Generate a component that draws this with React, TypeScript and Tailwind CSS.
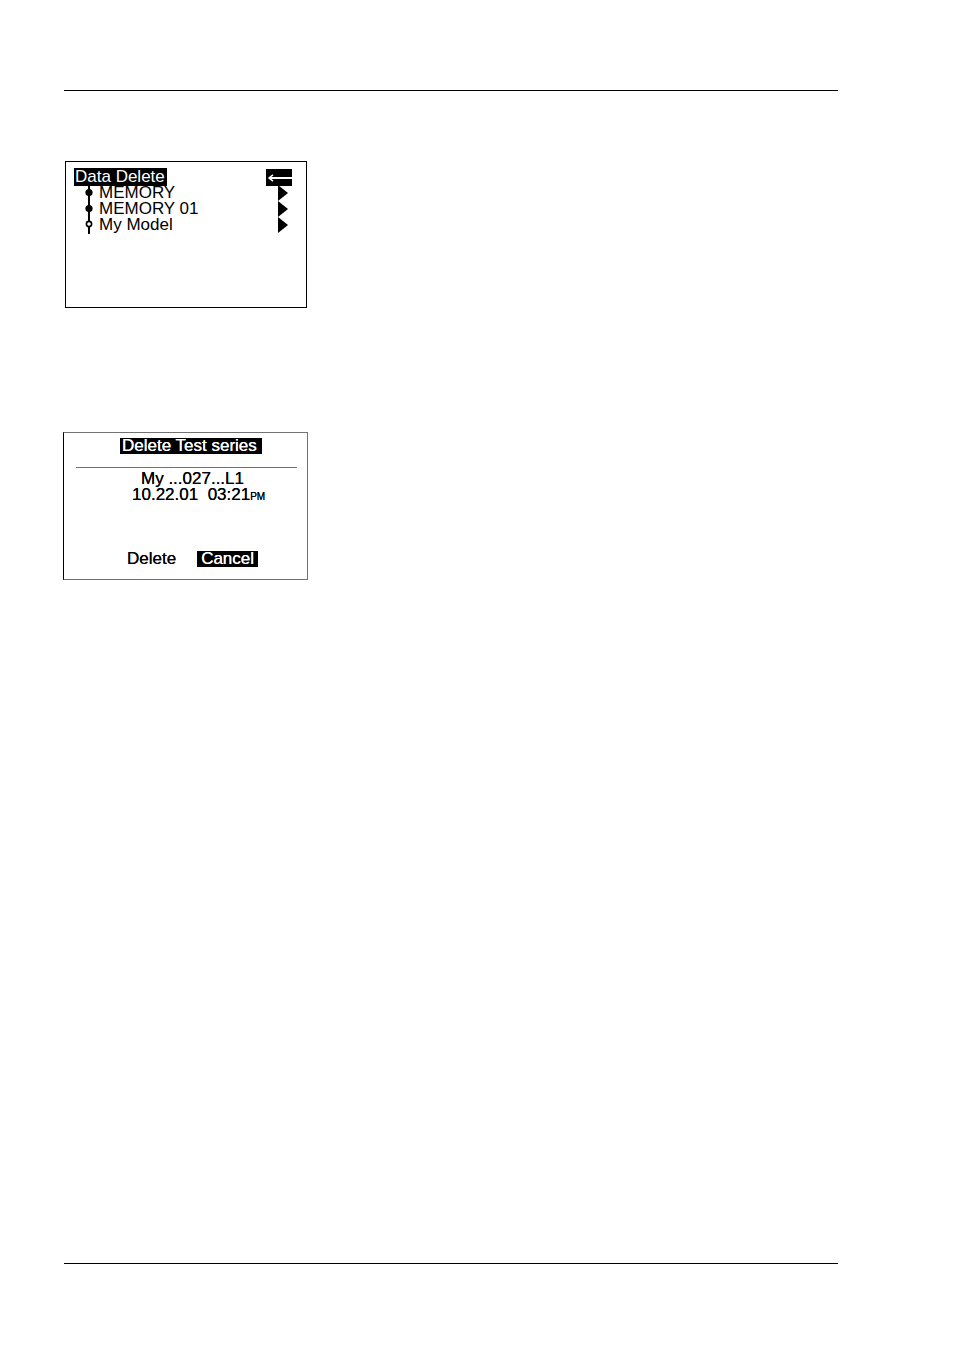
const entries = [
  { label: "MEMORY", filled: true },
  { label: "MEMORY 01", filled: true },
  { label: "My Model", filled: false },
];

function BackIcon() {
  return (
    <svg width="26" height="17" viewBox="0 0 26 17" aria-hidden="true">
      <rect width="26" height="17" fill="#000" />
      <path d="M26 9H3" stroke="#fff" strokeWidth="2" />
      <path d="M7 5.8L3 9l4 3.2" fill="none" stroke="#fff" strokeWidth="1.5" />
    </svg>
  );
}

function TreeNode({ filled }: { filled: boolean }) {
  return (
    <svg width="8" height="16" viewBox="0 0 8 16" className="overflow-visible" aria-hidden="true">
      <path d="M4 0v17" stroke="#000" strokeWidth="2" />
      {filled ? (
        <circle cx="4" cy="7.5" r="3.6" fill="#000" />
      ) : (
        <circle cx="4" cy="7" r="2.6" fill="#fff" stroke="#000" strokeWidth="1.6" />
      )}
    </svg>
  );
}

function DataDeleteScreen() {
  return (
    <section className="ml-px w-[242px] border border-black pt-1.5 pr-3.5 pb-[74px] pl-2 text-[17px]">
      <div className="flex items-end justify-between">
        <h1 className="bg-black pr-0.5 pl-px leading-[18px] text-white">Data Delete</h1>
        <button type="button" aria-label="Back">
          <BackIcon />
        </button>
      </div>
      <ul className="-mt-px">
        {entries.map((entry) => (
          <li key={entry.label}>
            <button type="button" className="flex h-4 w-full items-center pr-1 pl-[11px] text-left">
              <TreeNode filled={entry.filled} />
              <span className="grow pl-1.5 leading-4">{entry.label}</span>
              <svg width="10" height="16" viewBox="0 0 10 16" aria-hidden="true">
                <path d="M0 0l10 8-10 8z" fill="#000" />
              </svg>
            </button>
          </li>
        ))}
      </ul>
    </section>
  );
}

function DeleteSeriesScreen() {
  return (
    <section className="-ml-px w-[245px] border border-neutral-500 border-l-black px-3 pt-[5px] pb-3 text-[17px] leading-4 text-shadow-[0_0_0_currentColor]">
      <div className="-mr-0.5 border-b border-neutral-500 pb-[13px] pl-11">
        <h2 className="inline-block bg-black pr-[5px] pl-0.5 align-top text-white">Delete Test series</h2>
      </div>
      <p className="mt-[3px] pl-[65px]">My ...027...L1</p>
      <p className="pl-14 whitespace-pre">
        10.22.01{"  "}03:21<span className="text-[10px]">PM</span>
      </p>
      <div className="mt-[46px] flex gap-[21px] pl-[51px]">
        <button type="button" className="text-shadow-[0_0_0_currentColor]">
          Delete
        </button>
        <button type="button" className="bg-black px-1 text-white text-shadow-[0_0_0_currentColor]">
          Cancel
        </button>
      </div>
    </section>
  );
}

export default function App() {
  return (
    <div className="min-h-screen bg-white pt-[90px] pr-[116px] pb-[90px] pl-16 font-['Liberation_Sans',Arial,sans-serif] text-black">
      <main className="min-h-[1174px] border-y border-black pt-[70px]">
        <DataDeleteScreen />
        <div className="mt-[124px]">
          <DeleteSeriesScreen />
        </div>
      </main>
    </div>
  );
}
